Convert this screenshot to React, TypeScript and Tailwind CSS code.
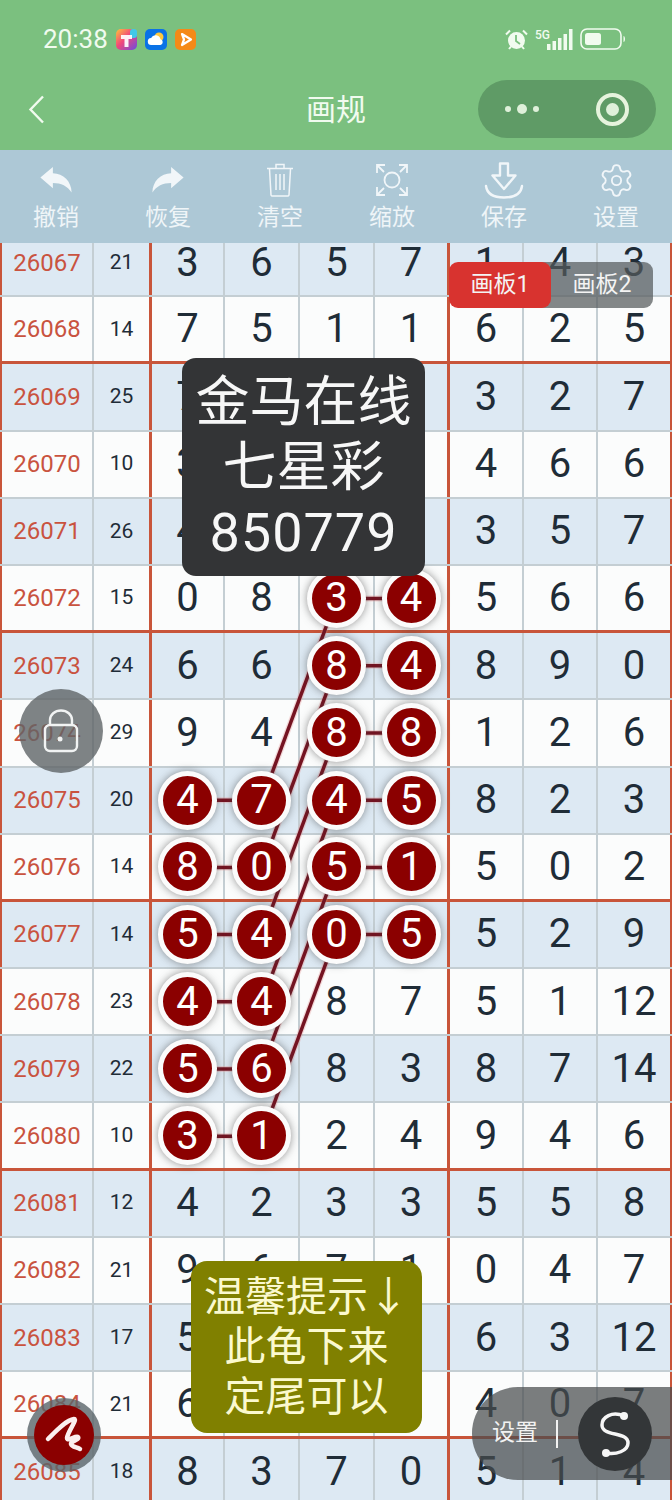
import { Settings } from 'lucide-react'

const ROW_H = 67.2

type Row = { id: number; sum: number; nums: number[]; hits?: number[] }

const ROWS: Row[] = [
  { id: 26067, sum: 21, nums: [3, 6, 5, 7, 1, 4, 3] },
  { id: 26068, sum: 14, nums: [7, 5, 1, 1, 6, 2, 5] },
  { id: 26069, sum: 25, nums: [7, 3, 6, 2, 3, 2, 7] },
  { id: 26070, sum: 10, nums: [3, 1, 4, 9, 4, 6, 6] },
  { id: 26071, sum: 26, nums: [4, 5, 0, 8, 3, 5, 7] },
  { id: 26072, sum: 15, nums: [0, 8, 3, 4, 5, 6, 6], hits: [2, 3] },
  { id: 26073, sum: 24, nums: [6, 6, 8, 4, 8, 9, 0], hits: [2, 3] },
  { id: 26074, sum: 29, nums: [9, 4, 8, 8, 1, 2, 6], hits: [2, 3] },
  { id: 26075, sum: 20, nums: [4, 7, 4, 5, 8, 2, 3], hits: [0, 1, 2, 3] },
  { id: 26076, sum: 14, nums: [8, 0, 5, 1, 5, 0, 2], hits: [0, 1, 2, 3] },
  { id: 26077, sum: 14, nums: [5, 4, 0, 5, 5, 2, 9], hits: [0, 1, 2, 3] },
  { id: 26078, sum: 23, nums: [4, 4, 8, 7, 5, 1, 12], hits: [0, 1] },
  { id: 26079, sum: 22, nums: [5, 6, 8, 3, 8, 7, 14], hits: [0, 1] },
  { id: 26080, sum: 10, nums: [3, 1, 2, 4, 9, 4, 6], hits: [0, 1] },
  { id: 26081, sum: 12, nums: [4, 2, 3, 3, 5, 5, 8] },
  { id: 26082, sum: 21, nums: [9, 6, 7, 1, 0, 4, 7] },
  { id: 26083, sum: 17, nums: [5, 2, 8, 6, 6, 3, 12] },
  { id: 26084, sum: 21, nums: [6, 1, 3, 5, 4, 0, 7] },
  { id: 26085, sum: 18, nums: [8, 3, 7, 0, 5, 1, 4] },
]

const COL_X = [187.5, 262, 336.5, 411]
const centerY = (i: number) => ROW_H * (i + 0.5) - 14

// col 3 -> col 2, three rows down
const DIAGONALS = [5, 6, 7, 8, 9, 10].map((i) => ({ x1: COL_X[2], y1: centerY(i), x2: COL_X[1], y2: centerY(i + 3) }))
const LINKS = [
  ...[5, 6, 7, 8, 9, 10].map((i) => ({ x1: COL_X[2], y1: centerY(i), x2: COL_X[3], y2: centerY(i) })),
  ...[8, 9, 10, 11, 12, 13].map((i) => ({ x1: COL_X[0], y1: centerY(i), x2: COL_X[1], y2: centerY(i) })),
]

function NumCell({ value, hit, className }: { value: number; hit: boolean; className: string }) {
  return (
    <div className={`flex items-center justify-center min-w-0 ${className}`}>
      {hit ? (
        <span className="relative z-10 flex items-center justify-center w-[59px] h-[59px] shrink-0 rounded-full bg-[#8b0000] border-[5.5px] border-[#fbfbfb] text-[40px] text-white shadow-[0_0_8px_rgba(60,60,60,0.55)]">
          {value}
        </span>
      ) : (
        <span className="text-[40px] text-[#1f2c37]">{value}</span>
      )}
    </div>
  )
}

function Sheet() {
  return (
    <div className="relative h-[1257px] overflow-hidden">
      <div className="-mt-[13px]">
        {ROWS.map((row, i) => {
          const endOfGroup = (row.id - 26068) % 4 === 0
          return (
            <div
              key={row.id}
              className={`grid grid-cols-[94px_58px_73px_75px_75px_75px_74px_74px_74px] h-[67.2px] ${
                endOfGroup ? 'border-b-[3px] border-[#c8553a]' : 'border-b-2 border-[#c4ced3]'
              } ${i % 2 === 0 ? 'bg-[#dde9f3]' : 'bg-[#fbfcfc]'}`}
            >
              <div className="flex items-center justify-center border-l-2 border-l-[#c8553a] border-r-2 border-r-[#c4ced3] text-[24px] text-[#c9533f]">
                {row.id}
              </div>
              <div className="flex items-center justify-center border-r-[3px] border-[#c8553a] text-[21px] text-[#1f2c37]">
                {row.sum}
              </div>
              {row.nums.map((n, c) => (
                <NumCell
                  key={c}
                  value={n}
                  hit={!!row.hits?.includes(c)}
                  className={
                    c === 3
                      ? 'border-r-[3px] border-[#c8553a]'
                      : c === 6
                        ? 'border-r-2 border-[#c8553a]'
                        : 'border-r-2 border-[#c4ced3]'
                  }
                />
              ))}
            </div>
          )
        })}
      </div>
      {/* connecting lines sit above the cells and under the balls */}
      <svg className="absolute left-0 top-0" width="672" height="1257" fill="none">
        {[...DIAGONALS, ...LINKS].map((l, i) => (
          <g key={i}>
            <line {...l} stroke="rgba(230,150,150,0.35)" strokeWidth="6" />
            <line {...l} stroke="#751422" strokeWidth="3.5" />
          </g>
        ))}
      </svg>
    </div>
  )
}

function AppIcons() {
  return (
    <div className="flex items-center gap-[8px] ml-[8px]">
      <svg width="21" height="21" viewBox="0 0 21 21">
        <defs>
          <linearGradient id="tile" x1="0" y1="0" x2="1" y2="1">
            <stop offset="0" stopColor="#ffc53a" />
            <stop offset="0.45" stopColor="#f2477a" />
            <stop offset="1" stopColor="#6a4be0" />
          </linearGradient>
        </defs>
        <rect width="21" height="21" rx="5" fill="url(#tile)" />
        <rect x="14" width="7" height="9" rx="3" fill="#41c8e8" />
        <path d="M5 6h11v4h-3.500v8h-4v-8H5z" fill="#fff" opacity="0.92" />
      </svg>
      <svg width="22" height="21" viewBox="0 0 22 21">
        <rect width="22" height="21" rx="5" fill="#0a72e6" />
        <circle cx="14" cy="8" r="4.500" fill="#ffc83d" />
        <path d="M6.500 16a3.500 3.500 0 0 1-.4-7 5 5 0 0 1 9.400 1.200A3 3 0 0 1 15.500 16z" fill="#fff" />
      </svg>
      <svg width="21" height="21" viewBox="0 0 21 21">
        <rect width="21" height="21" rx="5" fill="#f58a17" />
        <path d="M7 5l9 5.500L7 16l2-5.500z" fill="none" stroke="#fff" strokeWidth="2.200" strokeLinejoin="round" />
      </svg>
    </div>
  )
}

function StatusIcons() {
  return (
    <div className="flex items-center text-[#f1fbef]">
      <svg width="23" height="23" viewBox="0 0 23 23" fill="#f1fbef">
        <circle cx="11.500" cy="12.500" r="8.500" />
        <path d="M1 6.500 5 2.500M22 6.500 18 2.500M4 21l2-2.500M19 21l-2-2.500" stroke="#f1fbef" strokeWidth="2" />
        <path d="M11 7v6l4 3" fill="none" stroke="#7bc07f" strokeWidth="1.800" />
      </svg>
      <div className="flex items-end ml-[7px]">
        <span className="text-[12px] font-medium leading-[12px] self-start w-[12px]">5G</span>
        <svg width="27" height="21" viewBox="0 0 27 21" fill="#f1fbef">
          <rect x="0" y="15" width="3.500" height="6" />
          <rect x="5.500" y="12" width="3.500" height="9" />
          <rect x="11" y="9" width="3.500" height="12" />
          <rect x="16.500" y="5" width="3.500" height="16" />
          <rect x="22" y="0" width="3.500" height="21" />
        </svg>
      </div>
      <svg className="ml-[6px]" width="46" height="22" viewBox="0 0 46 22" fill="none">
        <rect x="1" y="1" width="40" height="20" rx="6" stroke="#f1fbef" strokeWidth="1.600" />
        <rect x="5" y="5" width="16" height="12" rx="2.500" fill="#f1fbef" />
        <path d="M43.500 8c2 0 2 6 0 6z" fill="#f1fbef" />
      </svg>
    </div>
  )
}

function Toolbar() {
  const items = [
    {
      label: '撤销',
      icon: (
        <svg width="32" height="26" viewBox="0 0 30 25" fill="#f1f6f9">
          <path d="M0 10 12 0v6c10 0 18 8 18 18.500-4-6-10-9-18-9v5z" />
        </svg>
      ),
    },
    {
      label: '恢复',
      icon: (
        <svg width="32" height="26" viewBox="0 0 30 25" fill="#f1f6f9">
          <path d="M30 10 18 0v6C8 6 0 14 0 24.500c4-6 10-9 18-9v5z" />
        </svg>
      ),
    },
    {
      label: '清空',
      icon: (
        <svg width="28" height="34" viewBox="0 0 28 34" fill="none" stroke="#f1f6f9" strokeWidth="1.500">
          <path d="M10 5V1.500h8V5M1 5.500h26M3.500 6l1.500 26a1.500 1.500 0 0 0 1.500 1h15a1.500 1.500 0 0 0 1.500-1L24.500 6M10 11v16M14 11v16M18 11v16" />
        </svg>
      ),
    },
    {
      label: '缩放',
      icon: (
        <svg width="34" height="34" viewBox="0 0 34 34" fill="none" stroke="#f1f6f9" strokeWidth="1.800">
          <circle cx="17" cy="17" r="7.500" />
          <path d="M2 10V2h8M24 2h8v8M32 24v8h-8M10 32H2v-8M3 3l6 6M31 3l-6 6M31 31l-6-6M3 31l6-6" />
        </svg>
      ),
    },
    {
      label: '保存',
      icon: (
        <svg width="40" height="37" viewBox="0 0 40 37" fill="none" stroke="#f1f6f9" strokeWidth="2.400" strokeLinejoin="round">
          <path d="M16 1.500h8v12h7.500L20 27 8.500 13.500H16z" />
          <path d="M2 24c1 8 8 11.500 18 11.500S37 32 38 24" strokeLinecap="round" />
        </svg>
      ),
    },
    { label: '设置', icon: <Settings size={37} strokeWidth={1.2} color="#f1f6f9" /> },
  ]
  return (
    <div className="grid grid-cols-6 h-[93px] bg-[#adc8d6]">
      {items.map((it) => (
        <div key={it.label} className="flex flex-col items-center">
          <div className="flex items-center justify-center h-[36px] mt-[12px]">{it.icon}</div>
          <span className="mt-[4px] text-[23px] leading-[32px] text-[#eff5f8]">{it.label}</span>
        </div>
      ))}
    </div>
  )
}

export default function App() {
  return (
    <div className="relative w-[672px] h-[1500px] overflow-hidden bg-white font-['Roboto','Noto_Sans_CJK_SC',sans-serif]">
      {/* status + nav */}
      <div className="h-[150px] bg-[#7bc07f]">
        <div className="flex items-center justify-between h-[78px] pl-[43px] pr-[46px]">
          <div className="flex items-center">
            <span className="text-[26px] text-[#f1fbef]">20:38</span>
            <AppIcons />
          </div>
          <StatusIcons />
        </div>
        <div className="relative flex items-center h-[62px] pl-[28px] pr-[16px]">
          <svg width="16" height="29" viewBox="0 0 16 29" fill="none" stroke="#f1fbef" strokeWidth="2.400">
            <path d="M15 1.500 2.500 14.500 15 27.500" />
          </svg>
          <span className="absolute left-0 right-0 text-center text-[30px] text-[#f1fbef]">画规</span>
          <div className="ml-auto flex items-center w-[178px] h-[58px] rounded-full bg-[#5f9b66]">
            <div className="flex items-center ml-[27px] gap-[4px]">
              <span className="w-[6px] h-[6px] rounded-full bg-[#dff0da]" />
              <span className="w-[10px] h-[10px] rounded-full bg-[#dff0da] mx-[2px]" />
              <span className="w-[6px] h-[6px] rounded-full bg-[#dff0da]" />
            </div>
            <div className="ml-auto mr-[27px] flex items-center justify-center w-[33px] h-[33px] rounded-full border-[4px] border-[#e6f3dd]">
              <span className="w-[13px] h-[13px] rounded-full bg-[#dff0da]" />
            </div>
          </div>
        </div>
      </div>

      <Toolbar />
      <Sheet />

      {/* board tabs */}
      <div className="absolute z-20 left-[449px] top-[262px] flex items-stretch h-[46px] text-[23px] text-[#f4f4f4]">
        <div className="relative z-10 flex items-center justify-center w-[102px] rounded-[9px] bg-[#d8332f]">画板1</div>
        <div className="flex items-center justify-center w-[113px] -ml-[11px] pl-[11px] rounded-r-[9px] bg-[rgba(85,90,92,0.72)]">
          画板2
        </div>
      </div>

      {/* title card */}
      <div className="absolute z-20 left-[182px] top-[358px] flex flex-col items-center justify-center w-[243px] h-[218px] rounded-[14px] bg-[#333436] text-[54px] leading-[65px] text-[#f7f7f7]">
        <span>金马在线</span>
        <span>七星彩</span>
        <span className="tracking-[1px]">850779</span>
      </div>

      {/* tip card */}
      <div className="absolute z-20 left-[191px] top-[1261px] flex flex-col items-center justify-center w-[231px] h-[172px] rounded-[16px] bg-[#808000] text-[41px] leading-[50px] text-[#fbf9cf]">
        <span>温馨提示↓</span>
        <span>此龟下来</span>
        <span>定尾可以</span>
      </div>

      {/* lock */}
      <div className="absolute z-20 left-[19px] top-[689px] flex items-center justify-center w-[84px] h-[84px] rounded-full bg-[rgba(95,100,102,0.8)]">
        <svg width="36" height="44" viewBox="0 0 36 44" fill="none" stroke="#f1f3f3" strokeWidth="2.400">
          <rect x="2" y="16" width="32" height="26" rx="5" />
          <path d="M7 16v-5a11 9.500 0 0 1 22 0v5" />
          <circle cx="17" cy="30" r="2.500" fill="#f1f3f3" stroke="none" />
        </svg>
      </div>

      {/* pen */}
      <div className="absolute z-20 left-[27px] top-[1398px] flex items-center justify-center w-[74px] h-[74px] rounded-full bg-[rgba(90,100,105,0.8)]">
        <div className="flex items-center justify-center w-[60px] h-[60px] rounded-full bg-[#8b0000]">
          <svg width="60" height="60" viewBox="0 0 60 60" fill="none" stroke="#fbeeee" strokeWidth="4.500" strokeLinecap="round" strokeLinejoin="round">
            <path d="M14 34C22 26 32 15 40 14c4 0-6 12-7 19 0 4 9-3 11-1 2 3-8 4-7 7 1 3 5 3 9 5" />
          </svg>
        </div>
      </div>

      {/* settings pill */}
      <div className="absolute z-20 left-[472px] top-[1387px] flex items-center w-[200px] h-[93px] pl-[20px] rounded-l-[46px] bg-[rgba(72,76,78,0.72)]">
        <span className="text-[23px] text-[#f2f2f2]">设置</span>
        <span className="w-[2px] h-[28px] ml-[18px] bg-[#f2f2f2]" />
        <div className="flex items-center justify-center w-[74px] h-[74px] ml-[20px] rounded-full bg-[#333638]">
          <svg width="74" height="74" viewBox="0 0 74 74" fill="none" stroke="#f6f6f6" strokeWidth="3.500" strokeLinecap="round">
            <path d="M46 19C34 14 24 20 24 28c0 12 26 6 26 18 0 8-12 12-22 10" />
            <circle cx="46" cy="19" r="4" fill="#f6f6f6" stroke="none" />
            <circle cx="28" cy="56" r="4" fill="#f6f6f6" stroke="none" />
          </svg>
        </div>
      </div>
    </div>
  )
}
